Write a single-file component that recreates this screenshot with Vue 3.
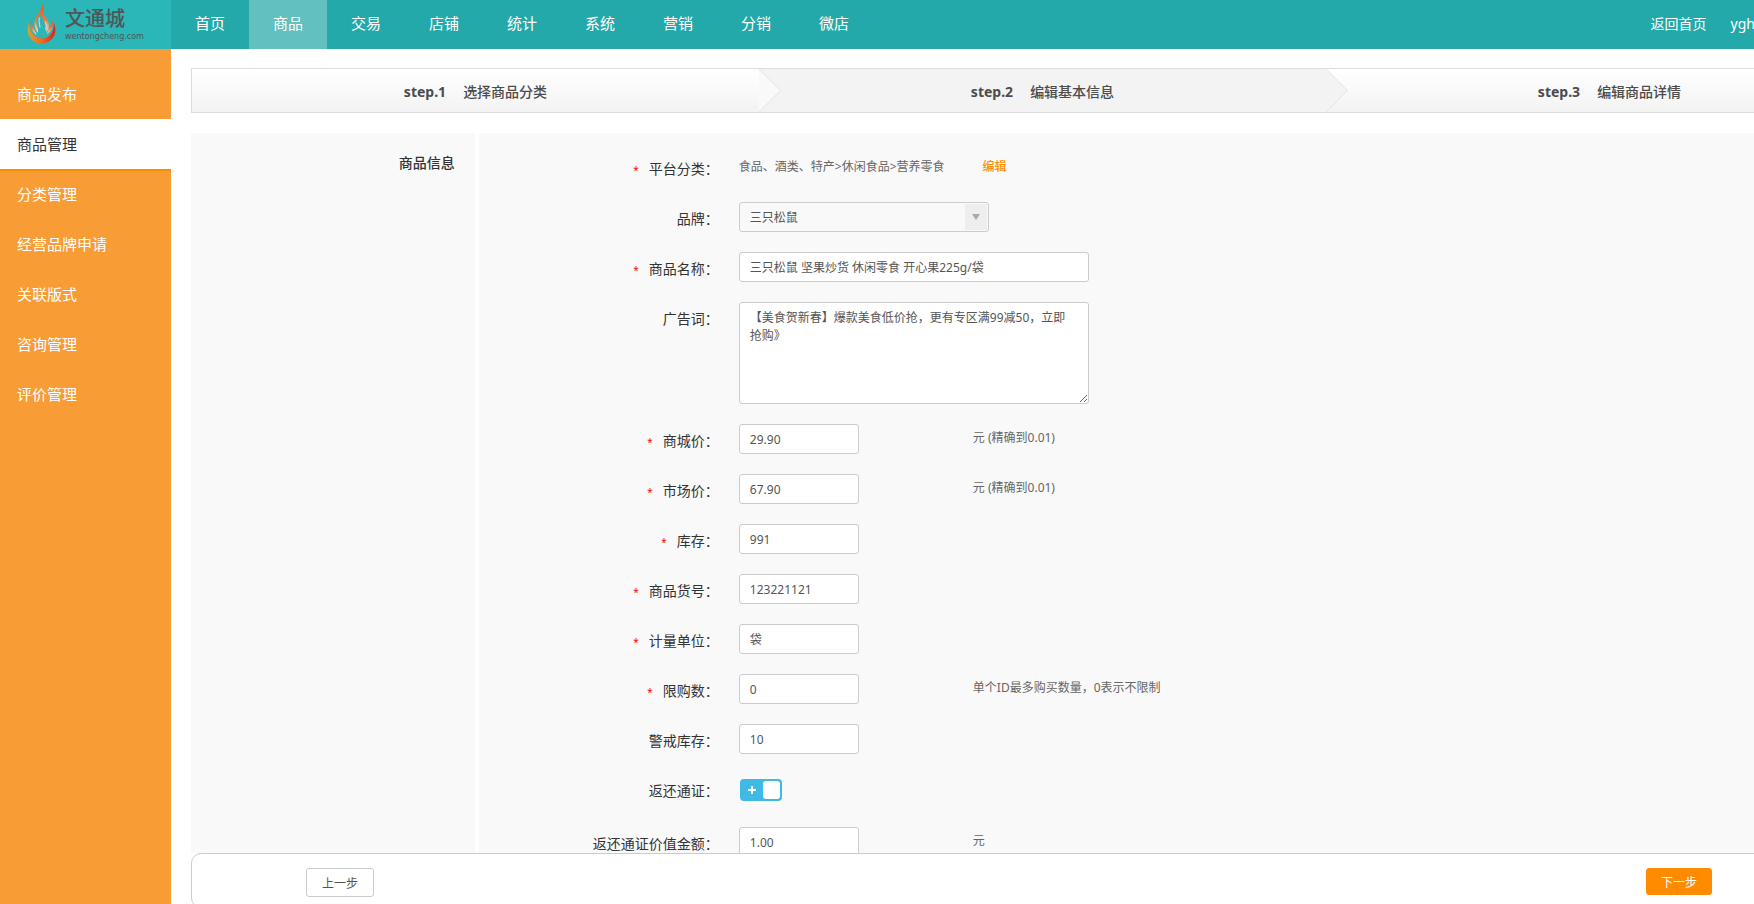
<script setup>
import { ref, reactive } from 'vue'

const navItems = ['首页', '商品', '交易', '店铺', '统计', '系统', '营销', '分销', '微店']
const activeNav = ref('商品')

const sideItems = ['商品发布', '商品管理', '分类管理', '经营品牌申请', '关联版式', '咨询管理', '评价管理']
const activeSide = ref('商品管理')

const steps = [
  { no: 'step.1', title: '选择商品分类' },
  { no: 'step.2', title: '编辑基本信息' },
  { no: 'step.3', title: '编辑商品详情' },
]
const currentStep = 1

const fields = reactive([
  { id: 'shop-price', label: '商城价', required: true, value: '29.90', help: '元 (精确到0.01)' },
  { id: 'market-price', label: '市场价', required: true, value: '67.90', help: '元 (精确到0.01)' },
  { id: 'stock', label: '库存', required: true, value: '991' },
  { id: 'goods-sn', label: '商品货号', required: true, value: '123221121' },
  { id: 'unit', label: '计量单位', required: true, value: '袋' },
  { id: 'limit', label: '限购数', required: true, value: '0', help: '单个ID最多购买数量，0表示不限制' },
  { id: 'warn-stock', label: '警戒库存', required: false, value: '10' },
])

const brand = ref('三只松鼠')
const goodsName = ref('三只松鼠 坚果炒货 休闲零食 开心果225g/袋')
const slogan = ref('【美食贺新春】爆款美食低价抢，更有专区满99减50，立即抢购》')
const returnToken = ref(true)
const tokenAmount = ref('1.00')
</script>

<template>
  <div class="page">
    <header class="topbar">
      <a class="logo" href="#">
        <svg class="flame" viewBox="0 0 30 40" aria-hidden="true">
          <defs>
            <linearGradient id="bowl" x1="0" x2="1" y1="0" y2="0">
              <stop offset="0" stop-color="#e0a02c" />
              <stop offset="0.5" stop-color="#f26a1c" />
              <stop offset="1" stop-color="#e0201c" />
            </linearGradient>
            <linearGradient id="tongue" x1="0" x2="0" y1="0" y2="1">
              <stop offset="0" stop-color="#e8561c" />
              <stop offset="0.55" stop-color="#ea7a40" />
              <stop offset="1" stop-color="#f6e4d4" />
            </linearGradient>
          </defs>
          <path d="M2 19C-2 28 3 39.500 14.500 39.500S31.500 28 26.500 18.500C28 26 23 34.500 15 34.500C7 34.500 2 27 2 19Z" fill="url(#bowl)" />
          <path d="M15.500 0C17.500 5 15.500 8 17.500 11.500C19.500 15 23 17 21.500 25L19 28.500C20.500 22 17.500 19 16 15.500C15 13 15 11 14.500 9C13 12 9.500 14 9.500 18C9.500 22 11.500 24 11 29C9 26 7 23 7.500 18C8 12 14 9 15.500 0Z" fill="url(#tongue)" />
          <path d="M4.500 16.500C4 22 8.500 25 9.500 31C5.500 28 1.500 22 4.500 16.500ZM24.500 15C26 21 21 24 20 30C25 27 28 21 24.500 15Z" fill="url(#tongue)" />
          <path d="M12.500 13.500C11 17 13 20 13 23.500M18 17.500C19.500 20 19.500 23 18.500 25.500" fill="none" stroke="#f3ddc9" stroke-width="1" />
        </svg>
        <span class="logo-text">
          <span class="logo-name">文通城</span>
          <span class="logo-domain">wentongcheng.com</span>
        </span>
      </a>
      <nav class="nav">
        <a
          v-for="item in navItems"
          :key="item"
          href="#"
          :class="{ active: item === activeNav }"
          @click.prevent="activeNav = item"
        >{{ item }}</a>
      </nav>
      <div class="account">
        <a href="#">返回首页</a>
        <a href="#">ygh</a>
      </div>
    </header>

    <div class="body">
      <aside class="sidebar">
        <a
          v-for="item in sideItems"
          :key="item"
          href="#"
          :class="{ active: item === activeSide }"
          @click.prevent="activeSide = item"
        >{{ item }}</a>
      </aside>

      <main class="main">
        <div class="content">
          <ol class="steps">
            <li v-for="(step, i) in steps" :key="step.no" :class="{ current: i === currentStep }">
              <svg v-if="i > 0" class="arrow" :class="{ dark: i - 1 === currentStep }" viewBox="0 0 23 43" aria-hidden="true">
                <path d="M0 0L21.500 21.500L0 43" />
              </svg>
              <b>{{ step.no }}</b>
              <span>{{ step.title }}</span>
            </li>
          </ol>

          <section class="panel">
            <h2 class="panel-title">商品信息</h2>
            <form class="form" @submit.prevent>
              <div class="row">
                <span class="label"><i>*</i>平台分类：</span>
                <p class="wide category">
                  <span>食品、酒类、特产&gt;休闲食品&gt;营养零食</span>
                  <a href="#">编辑</a>
                </p>
              </div>
              <div class="row">
                <label class="label" for="brand">品牌：</label>
                <div class="wide">
                  <div class="select">
                    <select id="brand" v-model="brand">
                      <option>三只松鼠</option>
                    </select>
                    <span class="select-btn"></span>
                  </div>
                </div>
              </div>
              <div class="row">
                <label class="label" for="goods-name"><i>*</i>商品名称：</label>
                <div class="wide"><input id="goods-name" v-model="goodsName" class="input long" type="text" /></div>
              </div>
              <div class="row">
                <label class="label" for="slogan">广告词：</label>
                <div class="wide"><textarea id="slogan" v-model="slogan" class="input area"></textarea></div>
              </div>
              <div v-for="f in fields" :key="f.id" class="row">
                <label class="label" :for="f.id"><i v-if="f.required">*</i>{{ f.label }}：</label>
                <div><input :id="f.id" v-model="f.value" class="input" type="text" /></div>
                <span v-if="f.help" class="help">{{ f.help }}</span>
              </div>
              <div class="row switch-row">
                <label class="label" for="return-token">返还通证：</label>
                <div class="switch-cell">
                  <span class="switch" :class="{ off: !returnToken }">
                    <input id="return-token" v-model="returnToken" type="checkbox" />
                    <svg viewBox="0 0 8 8" aria-hidden="true"><path d="M4 0V8M0 4H8" /></svg>
                    <span class="knob"></span>
                  </span>
                </div>
              </div>
              <div class="row">
                <label class="label" for="token-amount">返还通证价值金额：</label>
                <div><input id="token-amount" v-model="tokenAmount" class="input" type="text" /></div>
                <span class="help">元</span>
              </div>
            </form>
          </section>
        </div>

        <footer class="actions">
          <button type="button" class="btn">上一步</button>
          <button type="button" class="btn primary">下一步</button>
        </footer>
      </main>
    </div>
  </div>
</template>

<style>
body {
  margin: 0;
  overflow: hidden;
}
</style>

<style scoped>
.page,
.page * {
  box-sizing: border-box;
}
.page {
  display: flex;
  flex-direction: column;
  height: 100vh;
  min-width: 1894px;
  overflow: hidden;
  background: #fff;
  color: #333;
  font-family: "Noto Sans", "Noto Sans CJK SC", sans-serif;
  font-size: 14px;
}
.page a {
  text-decoration: none;
}
.page input,
.page select,
.page textarea,
.page button {
  font-family: inherit;
}

.topbar {
  display: flex;
  flex: none;
  height: 49px;
  background: #23a9a9;
}
.logo {
  display: flex;
  gap: 8px;
  width: 171px;
  padding: 4px 0 0 27px;
  background: #2bb6b7;
  color: #505558;
}
.flame {
  width: 30px;
  height: 40px;
}
.logo-text {
  display: flex;
  flex-direction: column;
}
.logo-name {
  font-size: 20px;
  font-weight: 500;
  line-height: 29px;
}
.logo-domain {
  font-family: "DejaVu Sans", sans-serif;
  font-size: 8px;
  line-height: 8px;
}
.nav {
  display: flex;
}
.nav a {
  width: 78px;
  color: #fff;
  font-size: 15px;
  line-height: 46px;
  text-align: center;
}
.nav a.active {
  background: #62c0c0;
}
.account {
  display: flex;
  gap: 24px;
  margin-left: auto;
  padding-right: 139px;
  line-height: 48px;
}
.account a {
  color: #fff;
}

.body {
  display: flex;
  flex: 1;
  min-height: 0;
}
.sidebar {
  flex: none;
  width: 171px;
  padding-top: 20px;
  background: #f89c35;
}
.sidebar a {
  display: block;
  height: 50px;
  padding-left: 17px;
  color: #fff;
  font-size: 15px;
  line-height: 50px;
}
.sidebar a.active {
  background: #fff;
  box-shadow: 0 2px 0 #ff8c00;
  color: #333;
}

.main {
  display: flex;
  flex: 1;
  flex-direction: column;
  min-width: 0;
  padding-left: 20px;
}
.content {
  flex: 1;
  min-height: 0;
  padding-top: 19px;
  overflow: hidden;
}
.steps {
  display: grid;
  grid-template-columns: repeat(3, 1fr);
  height: 45px;
  margin: 0 0 20px;
  padding: 0;
  border: 1px solid #ddd;
  list-style: none;
  color: #4c4c4c;
}
.steps li {
  position: relative;
  display: flex;
  align-items: center;
  justify-content: center;
  gap: 17px;
  padding-top: 1px;
  background: linear-gradient(#fff, #f3f3f3);
}
.steps li.current {
  background: #f3f3f3;
}
.steps span {
  font-weight: 500;
}
.arrow {
  position: absolute;
  top: 0;
  left: 0;
  width: 23px;
  height: 43px;
  fill: #f9f9f9;
  stroke: #e5e5e5;
}
.arrow.dark {
  fill: #f3f3f3;
}

.panel {
  display: grid;
  grid-template-columns: 1fr 5fr;
}
.panel-title {
  margin: 0;
  padding: 18px 20px 0 0;
  background: #f9f9f9;
  font-size: 14px;
  font-weight: 500;
  line-height: 24px;
  text-align: right;
}
.form {
  display: flex;
  flex-direction: column;
  gap: 20px;
  padding: 19px 0 60px;
  border-left: 4px solid #fff;
  background: #f9f9f9;
}
.row {
  display: grid;
  grid-template-columns: 240px 214px 1fr;
  column-gap: 20px;
  min-height: 30px;
}
.wide {
  grid-column: 2 / 4;
}
.label {
  padding-top: 5px;
  line-height: 24px;
  text-align: right;
}
.label i {
  margin-right: 10px;
  color: #f00;
  font-size: 10px;
  font-style: normal;
  line-height: 1;
}
.category {
  display: flex;
  gap: 38px;
  margin: 0;
  color: #666;
  font-size: 12px;
  line-height: 30px;
}
.category a {
  color: #ff8c00;
  font-weight: 500;
}
.input {
  display: block;
  width: 120px;
  height: 30px;
  padding: 0 10px;
  border: 1px solid #ccc;
  border-radius: 3px;
  outline: none;
  background: #fff;
  color: #555;
  font-size: 12px;
}
.input.long {
  width: 350px;
}
.input.area {
  width: 350px;
  height: 102px;
  padding: 6px 20px 6px 10px;
  line-height: 18px;
  resize: both;
}
.select {
  display: flex;
  width: 250px;
  height: 30px;
  padding: 1px;
  border: 1px solid #ccc;
  border-radius: 3px;
}
.select select {
  flex: 1;
  padding: 0 9px;
  border: 0;
  outline: none;
  appearance: none;
  background: transparent;
  color: #555;
  font-size: 12px;
}
.select-btn {
  display: flex;
  align-items: center;
  justify-content: center;
  width: 22px;
  background: #eee;
  pointer-events: none;
}
.select-btn::before {
  content: "";
  border: 4px solid transparent;
  border-top: 6px solid #aaa;
  border-bottom: 0;
}
.help {
  color: #666;
  font-size: 12px;
  line-height: 28px;
}
.switch-row {
  min-height: 33px;
}
.switch-cell {
  padding: 5px 0 0 1px;
}
.switch {
  position: relative;
  display: flex;
  align-items: center;
  justify-content: space-between;
  width: 42px;
  height: 22px;
  padding: 2px 2px 2px 8px;
  border-radius: 4px;
  background: #3fbae4;
}
.switch.off {
  flex-direction: row-reverse;
  padding: 2px 8px 2px 2px;
  background: #bbb;
}
.switch input {
  position: absolute;
  inset: 0;
  width: 100%;
  height: 100%;
  margin: 0;
  opacity: 0;
  cursor: pointer;
}
.switch svg {
  width: 8px;
  height: 8px;
  stroke: #fff;
  stroke-width: 2;
}
.knob {
  width: 17px;
  height: 18px;
  border-radius: 3px;
  background: #fff;
}

.actions {
  display: flex;
  flex: none;
  align-items: flex-start;
  justify-content: space-between;
  height: 55px;
  margin-bottom: -4px;
  padding: 14px 181px 0 114px;
  border: 1px solid #ccc;
  border-radius: 10px;
  background: #fff;
}
.btn {
  width: 68px;
  height: 29px;
  padding: 0;
  border: 1px solid #ccc;
  border-radius: 3px;
  background: #fff;
  color: #555;
  font-size: 12px;
}
.btn.primary {
  width: 66px;
  height: 27px;
  border-color: #ff8c00;
  background: #ff8c00;
  color: #fff;
}
</style>
